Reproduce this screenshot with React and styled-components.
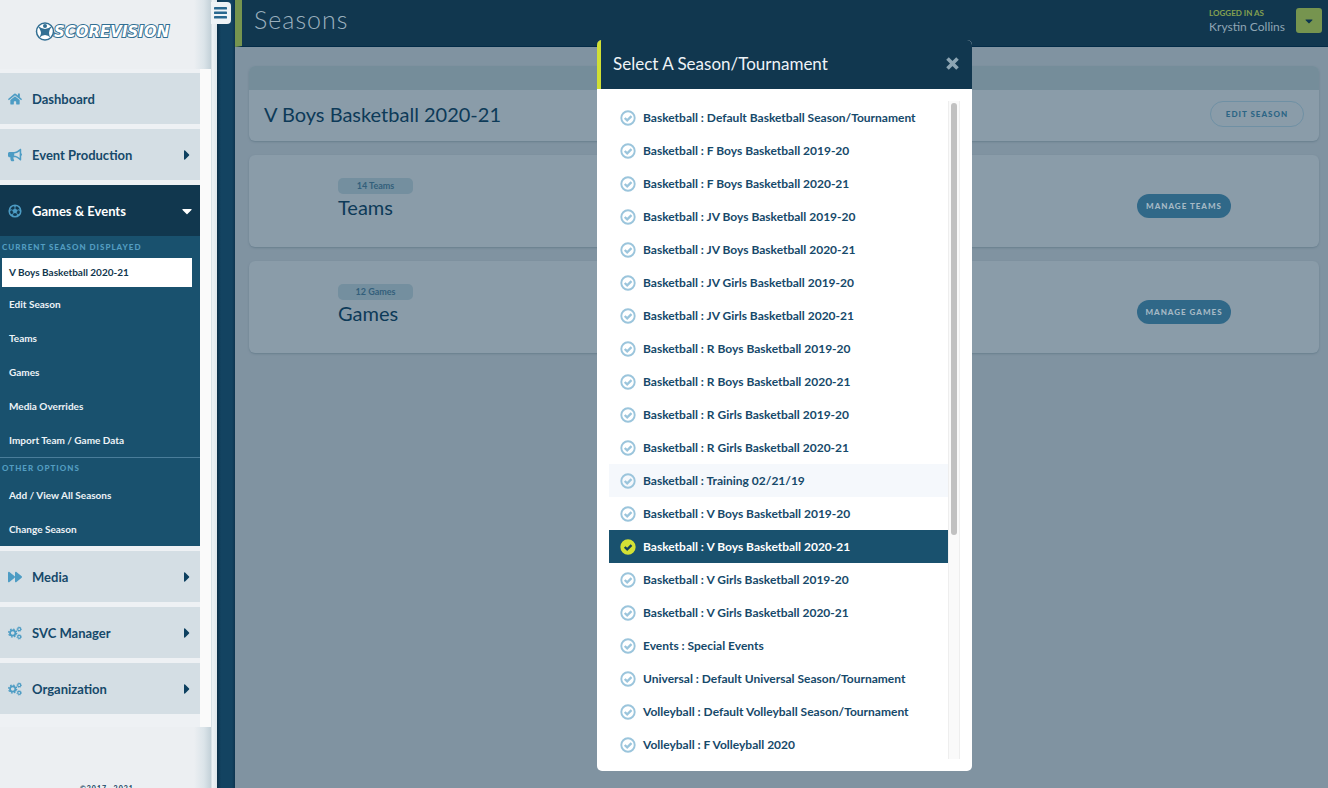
import React from "react";
import styled, { createGlobalStyle } from "styled-components";
import { FaHome, FaBullhorn, FaForward, FaCaretDown, FaCaretRight } from "react-icons/fa";

const Global = createGlobalStyle`
  *, *::before, *::after { box-sizing: border-box; }
  html, body, #root { height: 100%; }
  body { margin: 0; overflow: hidden; background: #8093a1; font-family: Lato, "Open Sans", sans-serif; color: #124260; }
  button { font-family: inherit; border: 0; padding: 0; cursor: pointer; background: none; color: inherit; }
  a { color: inherit; text-decoration: none; }
  h1, h2, h3, p, ul { margin: 0; padding: 0; font-weight: 400; list-style: none; }
`;

const Page = styled.div`
  display: flex;
  height: 100vh;
  position: relative;
  overflow: hidden;
`;

const Sidebar = styled.aside`
  width: 217px;
  flex: none;
  display: flex;
  flex-direction: column;
  background: linear-gradient(90deg, #eceff2 0 194px, #dbe4e9 204px, #c3d1d8 211px, #eef3f6 212px, #dfe7eb 217px);
`;

const Logo = styled.a`
  height: 73px;
  flex: none;
  display: flex;
  align-items: center;
  padding: 0 0 10px 35px;
`;

const Nav = styled.nav`
  width: 211px;
  flex: none;
  margin-top: -4px;
  padding: 4px 11px 13px 0;
  background: linear-gradient(90deg, #eef1f4 0 200px, #fafafa 200px);
  display: flex;
  flex-direction: column;
  gap: 5px;
`;

const NavButton = styled.button`
  display: flex;
  align-items: center;
  width: 100%;
  height: 51px;
  padding: 0 5px 0 8px;
  text-align: left;
  font-size: 13px;
  font-weight: 700;
  color: ${(p) => (p.$active ? "#fff" : "#16496a")};
  background: ${(p) => (p.$active ? "#11374e" : "#d4dee4")};
  > svg:first-child { width: 14px; height: 14px; color: #4d9cc4; }
  > svg:last-child:not(:first-child) { color: ${(p) => (p.$active ? "#fff" : "#0d4060")}; }
`;

const NavLabel = styled.span`
  flex: 1;
  padding-left: 10px;
`;

const SubMenu = styled.div`
  margin-top: -5px;
  background: #19516e;
`;

const SubTitle = styled.h3`
  padding: 0 2px;
  font-size: 8px;
  line-height: ${(p) => (p.$ruled ? 20 : 22)}px;
  font-weight: 900;
  letter-spacing: 1px;
  color: #539dc1;
  border-top: ${(p) => (p.$ruled ? "1px solid #4a7d9a" : "0")};
`;

const CurrentSeason = styled.a`
  display: block;
  margin: 0 8px 0 2px;
  padding: 0 7px;
  line-height: 29px;
  font-size: 10px;
  font-weight: 700;
  background: #fff;
  color: #11374e;
`;

const SubLink = styled.a`
  display: block;
  padding: 0 9px;
  line-height: 34px;
  font-size: 10px;
  font-weight: 700;
  color: #edf3f7;
`;

const Copyright = styled.p`
  margin-top: 56px;
  padding-left: 80px;
  font-size: 7px;
  line-height: 10px;
  font-weight: 700;
  letter-spacing: 1px;
`;

const Gutter = styled.div`
  width: 18px;
  flex: none;
  background: linear-gradient(90deg, #0a2f48, #134361 4px 15px, #0d3450);
`;

const MenuToggle = styled.button`
  position: absolute;
  left: 211px;
  top: 2px;
  width: 20px;
  height: 22px;
  border-radius: 0 4px 4px 0;
  background: #eef3f6;
  color: #28688f;
  display: grid;
  place-items: center;
`;

const Main = styled.main`
  flex: 1;
  min-width: 0;
`;

const TopBar = styled.header`
  height: 47px;
  display: flex;
  justify-content: space-between;
  background: #11374f;
  border-left: 7px solid #76944f;
  border-bottom: 1px solid #032b47;
  padding: 0 6px 0 12px;
`;

const PageTitle = styled.h1`
  font-size: 25px;
  line-height: 39px;
  font-weight: 300;
  letter-spacing: 1px;
  color: #9bb0be;
`;

const Account = styled.div`
  display: flex;
  align-items: flex-start;
  gap: 11px;
  padding-top: 8px;
`;

const UserInfo = styled.div`
  font-size: 12px;
  line-height: 17px;
  color: #8fa5b4;
`;

const UserCaption = styled.div`
  font-size: 8px;
  line-height: 10px;
  font-weight: 700;
  color: #84a050;
`;

const AccountButton = styled.button`
  width: 26px;
  height: 25px;
  border-radius: 3px;
  background: #76944f;
  color: #0c3550;
  display: grid;
  place-items: center;
`;

const Cards = styled.div`
  display: flex;
  flex-direction: column;
  gap: 14px;
  padding: 19px 9px 0 14px;
`;

const Card = styled.section`
  border-radius: 6px;
  background: #8a9ca9;
  box-shadow: 0 1px 2px #687f8e;
  overflow: hidden;
`;

const CardStrip = styled.div`
  height: 24px;
  background: #758d9a;
`;

const SeasonRow = styled.div`
  height: 51px;
  display: flex;
  align-items: center;
  justify-content: space-between;
  padding: 0 15px 4px;
`;

const Heading = styled.h2`
  font-size: 20px;
  line-height: 26px;
  color: #0d3a58;
`;

const EntityRow = styled.div`
  height: 92px;
  display: flex;
  justify-content: space-between;
  align-items: flex-start;
  padding: 23px 88px 0 89px;
`;

const CountBadge = styled.div`
  width: 75px;
  border-radius: 5px;
  text-align: center;
  font-size: 9px;
  line-height: 16px;
  font-weight: 700;
  background: #748f9f;
  color: #335f7b;
`;

const PillButton = styled.button`
  width: 94px;
  height: ${(p) => (p.$outline ? 26 : 24)}px;
  margin-top: ${(p) => (p.$outline ? 0 : 16)}px;
  border-radius: 13px;
  border: ${(p) => (p.$outline ? "1px solid #6f90a4" : "0")};
  background: ${(p) => (p.$outline ? "transparent" : "#306888")};
  color: ${(p) => (p.$outline ? "#2c6585" : "#a5b9c5")};
  font-size: 8px;
  font-weight: 900;
  letter-spacing: 1px;
`;

const Dialog = styled.div`
  position: absolute;
  top: 40px;
  left: 597px;
  right: 356px;
  bottom: 17px;
  display: flex;
  flex-direction: column;
  border-radius: 5px;
  overflow: hidden;
  background: #fff;
`;

const DialogHeader = styled.header`
  height: 49px;
  flex: none;
  display: flex;
  align-items: center;
  justify-content: space-between;
  padding: 0 12px 3px;
  background: #11374f;
  border-left: 4px solid #d0df34;
`;

const DialogTitle = styled.h2`
  font-size: 17px;
  color: #eef3f7;
`;

const CloseButton = styled.button`
  color: #8da5b3;
  display: flex;
`;

const DialogBody = styled.div`
  flex: 1;
  min-height: 0;
  display: flex;
  padding: 12px;
`;

const SeasonList = styled.ul`
  flex: 1;
  min-width: 0;
  overflow: auto;
  scrollbar-width: none;
`;

const SeasonOption = styled.button`
  display: flex;
  align-items: center;
  gap: 7px;
  width: 100%;
  height: 33px;
  padding: 0 11px;
  text-align: left;
  font-size: 12px;
  font-weight: 700;
  background: ${(p) => (p.$selected ? "#19516e" : p.$hovered ? "#f5f8fc" : "#fff")};
  color: ${(p) => (p.$selected ? "#fff" : "#16496a")};
`;

const ScrollTrack = styled.div`
  width: 12px;
  padding: 2px;
  background: #fafafa;
  border: solid #eeeeee;
  border-width: 0 1px;
`;

const ScrollThumb = styled.div`
  height: 66%;
  width: 6px;
  margin: 0 auto;
  border-radius: 3px;
  background: #c1c1c1;
`;

const seasons = [
  "Basketball : Default Basketball Season/Tournament", "Basketball : F Boys Basketball 2019-20",
  "Basketball : F Boys Basketball 2020-21", "Basketball : JV Boys Basketball 2019-20",
  "Basketball : JV Boys Basketball 2020-21", "Basketball : JV Girls Basketball 2019-20",
  "Basketball : JV Girls Basketball 2020-21", "Basketball : R Boys Basketball 2019-20",
  "Basketball : R Boys Basketball 2020-21", "Basketball : R Girls Basketball 2019-20",
  "Basketball : R Girls Basketball 2020-21", "Basketball : Training 02/21/19",
  "Basketball : V Boys Basketball 2019-20", "Basketball : V Boys Basketball 2020-21",
  "Basketball : V Girls Basketball 2019-20", "Basketball : V Girls Basketball 2020-21",
  "Events : Special Events", "Universal : Default Universal Season/Tournament",
  "Volleyball : Default Volleyball Season/Tournament", "Volleyball : F Volleyball 2020",
];

const CheckIcon = ({ selected }) => (
  <svg width="16" height="16" viewBox="0 0 16 16" fill="none">
    <circle cx="8" cy="8" r="6.7" fill={selected ? "#d3e135" : "none"} stroke={selected ? "#d3e135" : "#9bc5dc"} strokeWidth="1.9" />
    <path d="M4.700 8L7.200 10.400L11.500 6.100" stroke={selected ? "#11415c" : "#9bc5dc"} strokeWidth="2.300" />
  </svg>
);

const BallIcon = () => (
  <svg viewBox="0 0 14 14" fill="none" stroke="currentColor">
    <circle cx="7" cy="7" r="5.800" strokeWidth="1.500" />
    <path d="M7 4.500L9.400 6.200L8.500 9H5.500L4.600 6.200Z" fill="currentColor" strokeWidth=".4" />
    <path d="M7 4.500V3M9.400 6.200L11 5.700M8.500 9L9.500 10.500M5.500 9L4.500 10.500M4.600 6.200L3 5.700" strokeWidth=".9" />
    <path d="M5 1.500L7 3L9 1.500ZM12.500 5L11 6L12.600 8.300ZM1.500 5L3 6L1.400 8.300ZM9 10.500H11L9 12.500ZM5 10.500H3L5 12.500Z" fill="currentColor" strokeWidth=".4" />
  </svg>
);

const GearsIcon = () => (
  <svg viewBox="0 0 14 14" fill="none" stroke="currentColor">
    <circle cx="4.700" cy="7" r="2.700" strokeWidth="1.800" />
    <circle cx="4.700" cy="7" r="4" strokeWidth="1.300" strokeDasharray="1.600 1.540" />
    <circle cx="11.200" cy="3.200" r="1.500" strokeWidth="1.200" />
    <circle cx="11.200" cy="3.200" r="2.300" strokeWidth=".8" strokeDasharray=".9 .9" />
    <circle cx="11.200" cy="10.800" r="1.500" strokeWidth="1.200" />
    <circle cx="11.200" cy="10.800" r="2.300" strokeWidth=".8" strokeDasharray=".9 .9" />
  </svg>
);

const CloseIcon = () => (
  <svg width="15" height="15" viewBox="0 0 15 15" stroke="currentColor" strokeWidth="3.600">
    <path d="M2.500 2.500L12.500 12.500M12.500 2.500L2.500 12.500" />
  </svg>
);

const MenuIcon = () => (
  <svg width="14" height="12" viewBox="0 0 14 12" fill="currentColor">
    <rect width="13" height="2.600" rx=".7" />
    <rect y="4.500" width="13" height="2.600" rx=".7" />
    <rect y="9" width="13" height="2.600" rx=".7" />
  </svg>
);

function NavItem({ icon: Icon, label, active, leaf }) {
  const Caret = active ? FaCaretDown : FaCaretRight;
  return (
    <NavButton $active={active} aria-expanded={leaf ? undefined : !!active}>
      <Icon />
      <NavLabel>{label}</NavLabel>
      {!leaf && <Caret size={16} />}
    </NavButton>
  );
}

function EntityCard({ name, count }) {
  return (
    <Card>
      <EntityRow>
        <div>
          <CountBadge>{count} {name}</CountBadge>
          <Heading>{name}</Heading>
        </div>
        <PillButton>MANAGE {name.toUpperCase()}</PillButton>
      </EntityRow>
    </Card>
  );
}

export default function App() {
  return (
    <>
      <Global />
      <Page>
        <Sidebar>
          <Logo href="#" aria-label="ScoreVision">
            <svg width="140" height="21" viewBox="0 0 140 21">
              <circle cx="10" cy="10.500" r="8.500" fill="#fff" stroke="#326f93" strokeWidth="1.500" />
              <circle cx="10" cy="5" r="2" fill="#326f93" />
              <path d="M3 5Q7 8 10 8T17 5Q14 9 14 12T16 17Q13 14 10 14T4 17Q6 14 6 12T3 5Z" fill="#326f93" />
              <text x="19" y="16" fontFamily="DejaVu Sans, sans-serif" fontSize="15" fontWeight="700" fontStyle="italic" fill="#fff" stroke="#326f93" strokeWidth="2" paintOrder="stroke">SCOREVISION</text>
            </svg>
          </Logo>
          <Nav>
            <NavItem icon={FaHome} label="Dashboard" leaf />
            <NavItem icon={FaBullhorn} label="Event Production" />
            <NavItem icon={BallIcon} label="Games & Events" active />
            <SubMenu>
              <SubTitle>CURRENT SEASON DISPLAYED</SubTitle>
              <CurrentSeason href="#">V Boys Basketball 2020-21</CurrentSeason>
              {["Edit Season", "Teams", "Games", "Media Overrides", "Import Team / Game Data"].map((t) => (
                <SubLink href="#" key={t}>{t}</SubLink>
              ))}
              <SubTitle $ruled>OTHER OPTIONS</SubTitle>
              <SubLink href="#">Add / View All Seasons</SubLink>
              <SubLink href="#">Change Season</SubLink>
            </SubMenu>
            <NavItem icon={FaForward} label="Media" />
            <NavItem icon={GearsIcon} label="SVC Manager" />
            <NavItem icon={GearsIcon} label="Organization" />
          </Nav>
          <Copyright>©2017—2021</Copyright>
        </Sidebar>
        <Gutter />
        <MenuToggle aria-label="Toggle menu"><MenuIcon /></MenuToggle>
        <Main>
          <TopBar>
            <PageTitle>Seasons</PageTitle>
            <Account>
              <UserInfo>
                <UserCaption>LOGGED IN AS</UserCaption>
                Krystin Collins
              </UserInfo>
              <AccountButton aria-label="Account menu"><FaCaretDown size={12} /></AccountButton>
            </Account>
          </TopBar>
          <Cards>
            <Card>
              <CardStrip />
              <SeasonRow>
                <Heading>V Boys Basketball 2020-21</Heading>
                <PillButton $outline>EDIT SEASON</PillButton>
              </SeasonRow>
            </Card>
            <EntityCard name="Teams" count={14} />
            <EntityCard name="Games" count={12} />
          </Cards>
        </Main>
        <Dialog role="dialog" aria-label="Select A Season/Tournament">
          <DialogHeader>
            <DialogTitle>Select A Season/Tournament</DialogTitle>
            <CloseButton aria-label="Close"><CloseIcon /></CloseButton>
          </DialogHeader>
          <DialogBody>
            <SeasonList>
              {seasons.map((s, i) => (
                <li key={s}>
                  <SeasonOption $selected={i === 13} $hovered={i === 11}>
                    <CheckIcon selected={i === 13} />
                    {s}
                  </SeasonOption>
                </li>
              ))}
            </SeasonList>
            <ScrollTrack><ScrollThumb /></ScrollTrack>
          </DialogBody>
        </Dialog>
      </Page>
    </>
  );
}
